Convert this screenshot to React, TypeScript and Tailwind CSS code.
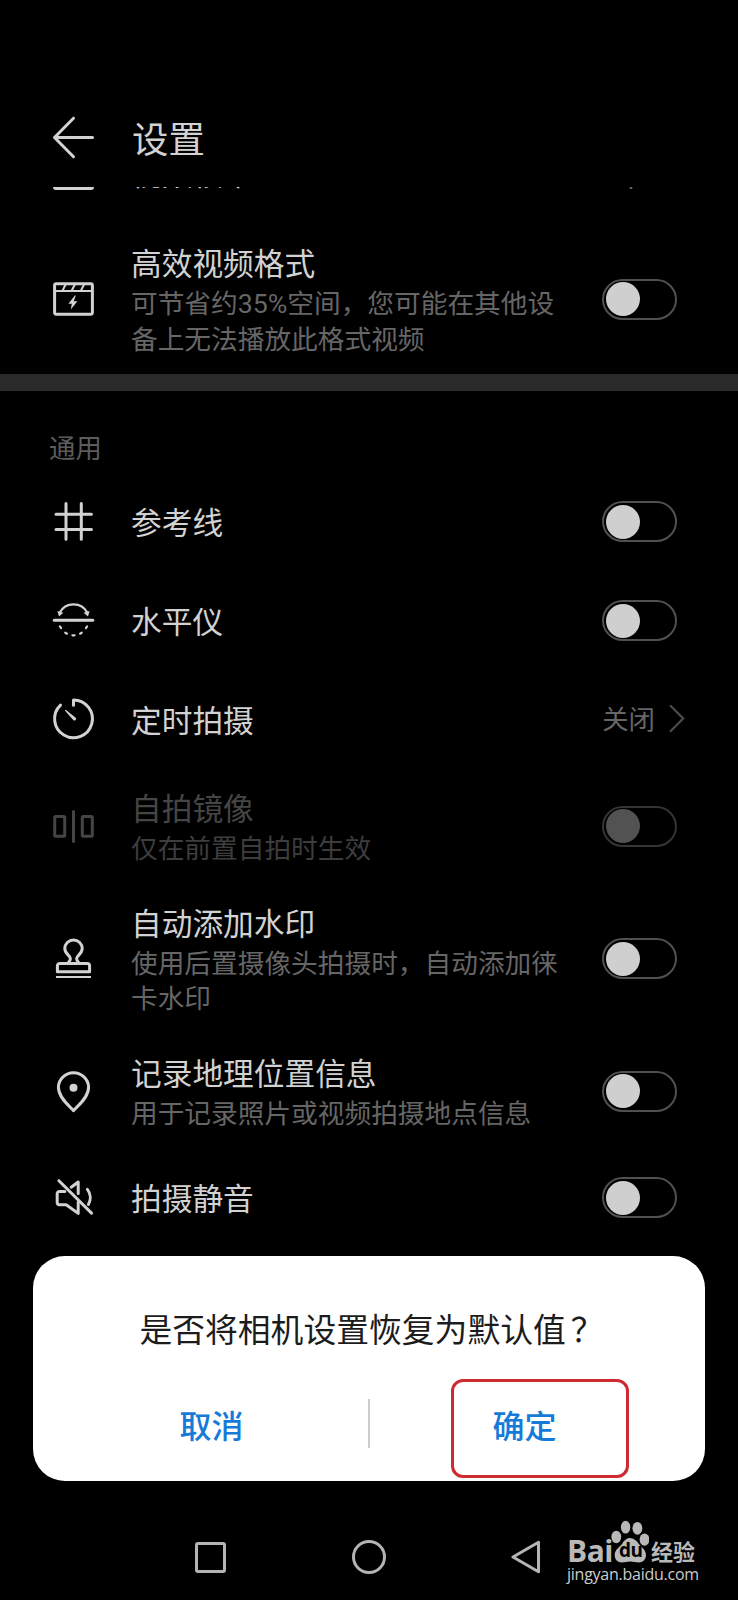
import type { ReactNode } from 'react'
import clsx from 'clsx'

interface SettingItem {
  id: string
  title: string
  description?: string
  value?: string
  disabled?: boolean
  height: string
  icon: ReactNode
}

const ICONS = {
  video: (
    <>
      <rect x="1.6" y="4.8" width="37.8" height="30.4" rx="1.6" />
      <path d="M2 12h37" strokeWidth="2" />
      <path d="M9.6 11.5l3-6M18.8 11.5l3-6M28 11.5l3-6" strokeWidth="2" />
      <path d="M21.8 16.6l-6.4 8.2h3.4l-1 5.8 6.6-8.4h-3.6l2-5.6z" fill="currentColor" stroke="none" />
    </>
  ),
  grid: <path d="M13 2.6v35.6M28.3 2.6v35.6M3 13.2h35.4M3 28.5h35.4" />,
  level: (
    <>
      <path d="M1.2 20.2h38.6" />
      <path d="M6.6 12.8a15.6 15.6 0 0 1 27.8 0" strokeWidth="2.2" />
      <path d="M4.4 11l6 1.8-4.4 3.8zM36.6 11l-6 1.8 4.4 3.8z" fill="currentColor" stroke="none" />
      <path d="M6.9 26.3l1.2 1.8M12.3 32.7l1.6 1M19.4 35.3h2.2M27.100 33.700l1.600-1M32.900 28.100l1.200-1.800" strokeWidth="2.200" />
    </>
  ),
  timer: (
    <>
      <path d="M20.5 6.2V.9a18.9 18.9 0 1 1-13 5.2" />
      <path d="M11.8 11.4l.9-.7 10 8a1.7 1.7 0 0 1-2.4 2.4z" fill="currentColor" stroke="none" />
    </>
  ),
  mirror: (
    <>
      <rect x="1.7" y="10.6" width="10" height="19.6" rx="1" />
      <rect x="29.3" y="10.6" width="10" height="19.6" rx="1" />
      <path d="M20.5 5.4v30" />
    </>
  ),
  stamp: (
    <>
      <path d="M15.4 24.6c1-1.400 2-2.600 2-4.200 0-2.400-5.600-4.600-5.600-10a8.700 8.400 0 0 1 17.400 0c0 5.400-5.600 7.600-5.600 10 0 1.600 1 2.800 2 4.200" />
      <path d="M4.400 33.800v-6a2.400 2.400 0 0 1 2.400-2.400h27.400a2.400 2.400 0 0 1 2.400 2.400v6z" />
      <path d="M3 39h35" strokeWidth="2" strokeLinecap="butt" />
    </>
  ),
  pin: (
    <>
      <path d="M20.500 39.600C16 34.800 5.400 26.500 5.400 16.300a15.100 14.500 0 0 1 30.200 0C35.600 26.500 25 34.800 20.500 39.600z" />
      <circle cx="20.500" cy="16.800" r="4" fill="currentColor" stroke="none" />
    </>
  ),
  mute: (
    <>
      <path d="M5.900 3.700l32.600 32.400" />
      <path d="M11.800 14.400H6.400A2.200 2.200 0 0 0 4.200 16.600v9A2.200 2.200 0 0 0 6.400 27.800h6.800l12 8.600V25" />
      <path d="M18.200 10.200l7-5.200v11.600" />
      <path d="M34.400 12.400c3.600 4.600 3.600 10.600 1 15" />
    </>
  ),
}

const VIDEO_ITEM: SettingItem = {
  id: 'hevc',
  title: '高效视频格式',
  description: '可节省约35%空间，您可能在其他设备上无法播放此格式视频',
  height: 'h-[150px]',
  icon: ICONS.video,
}

const GENERAL_ITEMS: SettingItem[] = [
  { id: 'grid', title: '参考线', height: 'h-[99px]', icon: ICONS.grid },
  { id: 'level', title: '水平仪', height: 'h-[99px]', icon: ICONS.level },
  { id: 'timer', title: '定时拍摄', value: '关闭', height: 'h-[99px]', icon: ICONS.timer },
  {
    id: 'mirror',
    title: '自拍镜像',
    description: '仅在前置自拍时生效',
    disabled: true,
    height: 'h-[114px]',
    icon: ICONS.mirror,
  },
  {
    id: 'watermark',
    title: '自动添加水印',
    description: '使用后置摄像头拍摄时，自动添加徕卡水印',
    height: 'h-[151px]',
    icon: ICONS.stamp,
  },
  {
    id: 'location',
    title: '记录地理位置信息',
    description: '用于记录照片或视频拍摄地点信息',
    height: 'h-[114px]',
    icon: ICONS.pin,
  },
  { id: 'mute', title: '拍摄静音', height: 'h-[99px]', icon: ICONS.mute },
]

function Icon({ children }: { children: ReactNode }) {
  return (
    <svg
      className="w-[41px] h-[41px] shrink-0 overflow-visible"
      viewBox="0 0 41 41"
      fill="none"
      stroke="currentColor"
      strokeWidth="3"
      strokeLinecap="round"
      strokeLinejoin="round"
    >
      {children}
    </svg>
  )
}

function Toggle({ disabled }: { disabled?: boolean }) {
  return (
    <button
      role="switch"
      aria-checked={false}
      disabled={disabled}
      className={clsx(
        'flex items-center w-[75px] h-[41px] shrink-0 rounded-full border-2 pl-0.5',
        disabled ? 'border-[#343434]' : 'border-[#505050]'
      )}
    >
      <span className={clsx('size-[34px] rounded-full', disabled ? 'bg-[#525252]' : 'bg-[#cfcfcf]')} />
    </button>
  )
}

function Chevron() {
  return (
    <svg className="w-4 h-7 shrink-0" viewBox="0 0 16 28" fill="none" stroke="#4c4c4c" strokeWidth="2.2">
      <path d="M1 .3l13.200 13.200L1 26.700" />
    </svg>
  )
}

function SettingRow({ item }: { item: SettingItem }) {
  return (
    <div
      className={clsx(
        'flex items-center pl-[53px]',
        item.height,
        item.value ? 'pr-[53px]' : 'pr-[61px]',
        item.disabled ? 'text-[#454545]' : 'text-[#d2d2d2]'
      )}
    >
      <Icon>{item.icon}</Icon>
      <div className={clsx('flex-1 ml-[37px] mr-10', item.description ? 'pt-[3px]' : 'pt-1')}>
        <h2 className="text-[30.7px] leading-[44px]">{item.title}</h2>
        {item.description && (
          <p className={clsx('text-[26.7px] leading-[35.5px]', item.disabled ? 'text-[#3d3d3d]' : 'text-[#666666]')}>
            {item.description}
          </p>
        )}
      </div>
      {item.value ? (
        <div className="flex items-center gap-3.5">
          <span className="pt-[3px] text-[26.4px] text-[#666666]">{item.value}</span>
          <Chevron />
        </div>
      ) : (
        <Toggle disabled={item.disabled} />
      )}
    </div>
  )
}

function Watermark() {
  return (
    <div className="absolute left-[567px] top-[1520px] w-[134px] text-[#b9b9b9]">
      <div className="flex items-end h-[45px] whitespace-nowrap">
        <span className="w-[44px] font-['Open_Sans'] font-bold text-[30px] leading-[28px] tracking-[-0.5px]">Bai</span>
        <div className="relative w-[38px] h-[45px]">
          <svg className="w-[38px] h-[45px]" viewBox="0 0 38 45" fill="currentColor">
            <ellipse cx="5.300" cy="17" rx="4.900" ry="6.200" />
            <ellipse cx="14.600" cy="7.200" rx="4.700" ry="6.400" />
            <ellipse cx="26.400" cy="8.300" rx="4.900" ry="6.400" />
            <ellipse cx="33.500" cy="19.600" rx="4.900" ry="6.200" />
            <path d="M19 18c-3.600 0-5.600 2.600-7.600 5.400-2.400 3.400-7.700 6-7.700 11.600 0 4.600 3 7.500 7.200 7.500 3 0 5-1 8.300-1s5.300 1 8.300 1c4.500 0 7.500-3 7.500-7.500 0-5.600-5-8.200-7.500-11.600C25.300 20.600 22.600 18 19 18z" />
          </svg>
          <span className="absolute left-[8px] top-[20px] font-['Open_Sans'] font-bold text-[19px] leading-5 tracking-[-0.5px] text-black">
            du
          </span>
        </div>
        <span className="ml-0.5 font-bold text-[22px] leading-[24px]">经验</span>
      </div>
      <p className="-mt-px font-['Open_Sans'] text-[16px] leading-5 tracking-[-0.25px] text-[#cccccc]">jingyan.baidu.com</p>
    </div>
  )
}

export default function App() {
  return (
    <div className="relative w-[738px] h-[1600px] overflow-hidden bg-black text-[#d2d2d2] font-['Roboto','Noto_Sans_CJK_SC',sans-serif]">
      {/* Header */}
      <header className="flex items-center h-[187px] pl-[53px] pt-[88px]">
        <Icon>
          <path d="M20.500 1.200L1.500 20.500l19 19.300M1.500 20.500h38" />
        </Icon>
        <h1 className="ml-[38px] pt-[7px] text-[36.4px] leading-[48px]">设置</h1>
      </header>

      {/* Row scrolled under the header */}
      <div className="h-[37px] overflow-hidden">
        <div className="flex items-center h-[44px] -mt-[38px] pl-[53px] pr-[52px]">
          <div className="w-[41px] h-[33px] mt-1 rounded-[3px] border-[3px] border-[#d2d2d2]" />
          <span className="flex-1 ml-[37px] mt-2 text-[30.6px]">视频帧率</span>
          <span className="mr-[30px] mt-2 text-[26px] text-[#666666]">30 fps</span>
        </div>
      </div>

      <SettingRow item={VIDEO_ITEM} />
      <div className="h-[17px] bg-[#2a2a2a]" />

      {/* General */}
      <h3 className="h-[81px] pl-[49px] pt-[39px] text-[26.4px] leading-[38px] text-[#5c5c5c]">通用</h3>
      {GENERAL_ITEMS.map((item) => (
        <SettingRow key={item.id} item={item} />
      ))}

      {/* Reset dialog */}
      <div role="dialog" className="mt-[9px] mx-[33px] h-[225px] rounded-[32px] bg-white pt-[52px]">
        <p className="text-center text-[32.8px] leading-[46px] text-[#1c1c1c]">
          是否将相机设置恢复为默认值<span className="ml-[5px] -mr-[5px]">？</span>
        </p>
        <div className="flex items-center mt-[25px] h-[99px] text-[32px] font-medium text-[#167bd8]">
          <button className="w-[335px] pl-[22px] pb-1">取消</button>
          <div className="w-[1.5px] h-[49px] mb-[10px] bg-[#cccccc]" />
          <button className="w-[178px] h-[99px] ml-[81px] pr-[30px] pb-1 rounded-[12px] border-[3px] border-[#cf2a31]">
            确定
          </button>
        </div>
      </div>

      {/* System navigation */}
      <nav className="flex items-center h-[34px] mt-[59px] pl-[195px] text-[#b4b4b4]">
        <div className="size-[31px] rounded-[3px] border-[3px] border-current" />
        <div className="size-[34px] ml-[126px] rounded-full border-[3px] border-current" />
        <svg className="w-[30px] h-[34px] ml-[125px]" viewBox="0 0 30 34" fill="none" stroke="currentColor" strokeWidth="3" strokeLinejoin="round">
          <path d="M27.500 2.200v29.600L2 17z" />
        </svg>
      </nav>

      <Watermark />
    </div>
  )
}
